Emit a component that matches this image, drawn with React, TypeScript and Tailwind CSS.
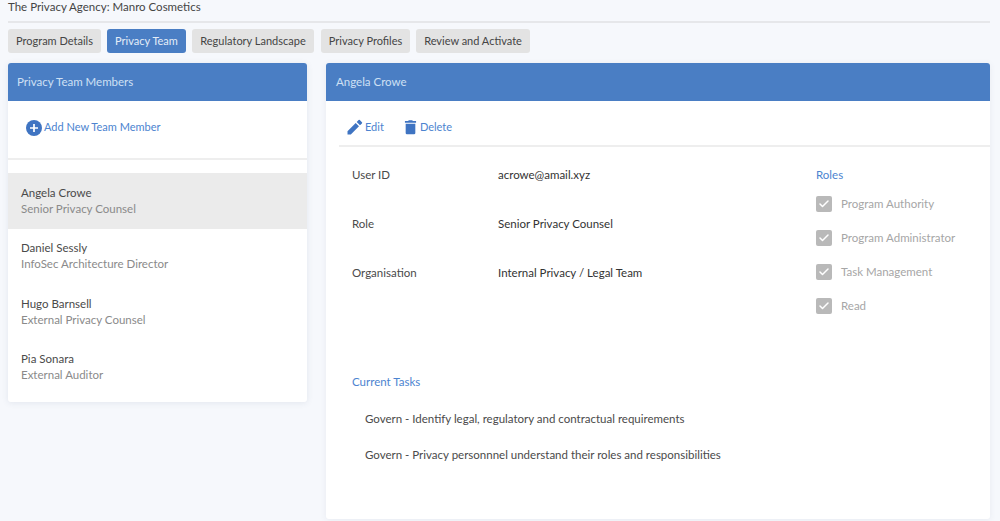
import { Check } from "lucide-react";

const tabs = ["Program Details", "Privacy Team", "Regulatory Landscape", "Privacy Profiles", "Review and Activate"];
const tabW = ["w-[93px]", "w-[79px]", "w-[122px]", "w-[89px]", "w-[114px]"];
const members = [
  ["Angela Crowe", "Senior Privacy Counsel"],
  ["Daniel Sessly", "InfoSec Architecture Director"],
  ["Hugo Barnsell", "External Privacy Counsel"],
  ["Pia Sonara", "External Auditor"],
];
const roles = ["Program Authority", "Program Administrator", "Task Management", "Read"];
const info = [
  ["User ID", "acrowe@amail.xyz"],
  ["Role", "Senior Privacy Counsel"],
  ["Organisation", "Internal Privacy / Legal Team"],
];

export default function App() {
  return (
    <div className="h-[521px] w-[1000px] overflow-hidden bg-[#f6f8fc] pl-2 pr-[10px] font-['Lato','Noto_Sans',sans-serif] text-[11.5px] text-[#4a4a4a] antialiased">
      <div className="flex h-[23px] items-start border-b-2 border-[#e6e7ea] pt-px text-[11.5px] leading-[12px] text-[#444]">
        The Privacy Agency: Manro Cosmetics
      </div>
      <div className="mt-[6px] flex h-[24px] gap-[6px]">
        {tabs.map((t, i) => (
          <div
            key={t}
            className={`flex items-center justify-center rounded-[3px] text-[11px] ${tabW[i]} ${
              i === 3 ? "ml-px" : ""
            } ${i === 1 ? "bg-[#4a7ec4] text-[#e4edf8]" : "bg-[#e3e3e3] text-[#454545]"}`}
          >
            {t}
          </div>
        ))}
      </div>
      <div className="mt-[10px] flex items-start gap-[19px]">
        <section className="w-[299px] shrink-0 overflow-hidden rounded-[3px] bg-white pb-[7px] shadow-[0_1px_6px_rgba(60,80,120,0.10)]">
          <div className="flex h-[38px] items-center bg-[#4a7ec4] pl-[9px] text-[#cfe0f4]">Privacy Team Members</div>
          <div className="flex h-[59px] items-center gap-[2px] border-b-2 border-[#eeeeee] pb-[5px] pl-[18px] text-[11px] text-[#4c84d0]">
            <svg width="16" height="16" viewBox="0 0 16 16" className="mt-px">
              <circle cx="8" cy="8" r="8" fill="#3f74c2" />
              <path d="M8 4v8M4 8h8" stroke="#fff" strokeWidth="1.7" />
            </svg>
            Add New Team Member
          </div>
          <div className="mt-[13px]">
            {members.map(([n, r], i) => (
              <div
                key={n}
                className={`flex h-[55.5px] flex-col justify-center pl-[13px] leading-[16px] ${i === 0 ? "bg-[#ebebeb]" : ""}`}
              >
                <div className="text-[#4a4a4a]">{n}</div>
                <div className="text-[#8a8a8a]">{r}</div>
              </div>
            ))}
          </div>
        </section>
        <section className="h-[456px] min-w-0 flex-1 overflow-hidden rounded-[3px] bg-white shadow-[0_1px_6px_rgba(60,80,120,0.08)]">
          <div className="flex h-[38px] items-center bg-[#4a7ec4] pl-[10px] text-[#cfe0f4]">Angela Crowe</div>
          <div className="ml-[13px] flex h-[46px] items-center border-b-2 border-[#eeeeee] pl-[8px] pt-[8px] text-[11px] text-[#4c84d0]">
            <svg width="16" height="16" viewBox="0 0 16 16">
              <path
                d="M0.5 12.2V15.5H3.8L12 7.3 8.7 4ZM13 6.3l1.9-1.9a.8.8 0 0 0 0-1.2L12.8 1.1a.8.8 0 0 0-1.2 0L9.7 3Z"
                fill="#3f74c2"
              />
            </svg>
            <span className="ml-[2px]">Edit</span>
            <svg width="13" height="16" viewBox="0 0 14 16" className="ml-[20px]">
              <path d="M1 1.6H4.4L5.2 .6H8.8L9.6 1.6H13V3.4H1ZM1.8 4.4H12.2V14.4A1.4 1.4 0 0 1 10.8 15.8H3.2A1.4 1.4 0 0 1 1.8 14.4Z" fill="#3f74c2" />
            </svg>
            <span className="ml-[3px]">Delete</span>
          </div>
          <div className="flex pl-[26px] pt-[20px]">
            <div className="w-[464px] shrink-0">
              {info.map(([k, v]) => (
                <div key={k} className="flex h-[49px] items-start leading-[16px]">
                  <div className="w-[146px] shrink-0 text-[#4a4a4a]">{k}</div>
                  <div className="text-[#333]">{v}</div>
                </div>
              ))}
            </div>
            <div className="flex-1 leading-[16px]">
              <div className="text-[#4c84d0]">Roles</div>
              <div className="mt-[13px] flex flex-col gap-[18px]">
                {roles.map((r) => (
                  <div key={r} className="flex h-[16px] items-center gap-[9px] text-[#a6a6a6]">
                    <span className="flex h-[16px] w-[16px] items-center justify-center rounded-[2px] bg-[#b9b9b9]">
                      <Check size={12} color="#fff" strokeWidth={3} />
                    </span>
                    {r}
                  </div>
                ))}
              </div>
            </div>
          </div>
          <div className="ml-[26px] mt-[60px] leading-[16px]">
            <div className="text-[#4c84d0]">Current Tasks</div>
            <div className="ml-[13px] mt-[21px] flex flex-col gap-[20px] text-[#4a4a4a]">
              <div>Govern - Identify legal, regulatory and contractual requirements</div>
              <div>Govern - Privacy personnnel understand their roles and responsibilities</div>
            </div>
          </div>
        </section>
      </div>
    </div>
  );
}
